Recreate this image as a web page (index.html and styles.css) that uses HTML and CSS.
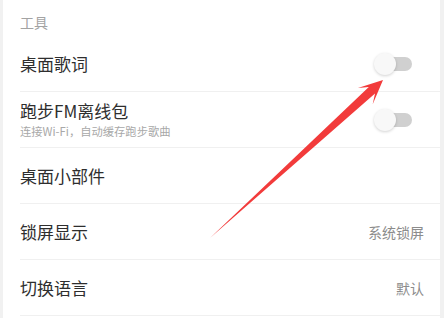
FILE: index.html
```html
<!DOCTYPE html>
<html lang="zh-CN">
<head>
  <meta charset="UTF-8" />
  <meta name="viewport" content="width=device-width, initial-scale=1.0"/>
  <title>设置</title>
  <link rel="stylesheet" href="styles.css">
</head>
<body>

  <div class="panel">
    <div class="section-title">工具</div>

    <div class="row">
      <div class="row-text">
        <div class="row-title">桌面歌词</div>
      </div>
      <div class="switch"><span class="knob"></span></div>
    </div>

    <div class="row">
      <div class="row-text">
        <div class="row-title">跑步FM离线包</div>
        <div class="row-sub">连接Wi-Fi，自动缓存跑步歌曲</div>
      </div>
      <div class="switch"><span class="knob"></span></div>
    </div>

    <div class="row">
      <div class="row-text">
        <div class="row-title">桌面小部件</div>
      </div>
    </div>

    <div class="row">
      <div class="row-text">
        <div class="row-title">锁屏显示</div>
      </div>
      <div class="row-value">系统锁屏</div>
    </div>

    <div class="row">
      <div class="row-text">
        <div class="row-title">切换语言</div>
      </div>
      <div class="row-value">默认</div>
    </div>
  </div>

  <svg class="arrow" width="444" height="318" viewBox="0 0 444 318">
    <polygon points="210,238 368.8,87 357.9,88.1 383,80 372.7,104.3 375,93.5" fill="#f23b3b"/>
  </svg>

</body>
</html>
```

FILE: styles.css
```css
* {
  box-sizing: border-box;
}

body {
  margin: 0;
  background-color: #f1f1f1;
  font-family: "Noto Sans CJK SC", "Noto Sans", sans-serif;
  width: 444px;
  height: 318px;
  overflow: hidden;
  position: relative;
}

.panel {
  margin: 0 4px 0 3px;
  background-color: #fff;
  height: 318px;
}

.section-title {
  height: 36px;
  padding: 13px 0 0 17px;
  font-size: 14px;
  line-height: 18px;
  color: #a3a3a3;
}

.row {
  height: 56px;
  margin-left: 17px;
  padding-right: 16px;
  border-bottom: 1px solid #f0f0f0;
  display: flex;
  align-items: center;
  justify-content: space-between;
}

.row-title {
  font-size: 17px;
  line-height: 22px;
  color: #2e2e2e;
}

.row-sub {
  font-size: 11.3px;
  line-height: 15px;
  margin-top: 2px;
  color: #a8a8a8;
}

.row-value {
  font-size: 14px;
  color: #8c8c8c;
}

.switch {
  position: relative;
  width: 38px;
  height: 24px;
  margin-right: 12px;
}

.switch::before {
  content: "";
  position: absolute;
  left: 4px;
  top: 5px;
  width: 34px;
  height: 14px;
  border-radius: 7px;
  background-color: #d0d0d0;
}

.knob {
  position: absolute;
  left: 0;
  top: 1px;
  width: 22px;
  height: 22px;
  border-radius: 50%;
  background-color: #f8f8f8;
  box-shadow: 0 1px 3px rgba(0, 0, 0, 0.18);
}

.arrow {
  position: absolute;
  top: 0;
  left: 0;
}
```
